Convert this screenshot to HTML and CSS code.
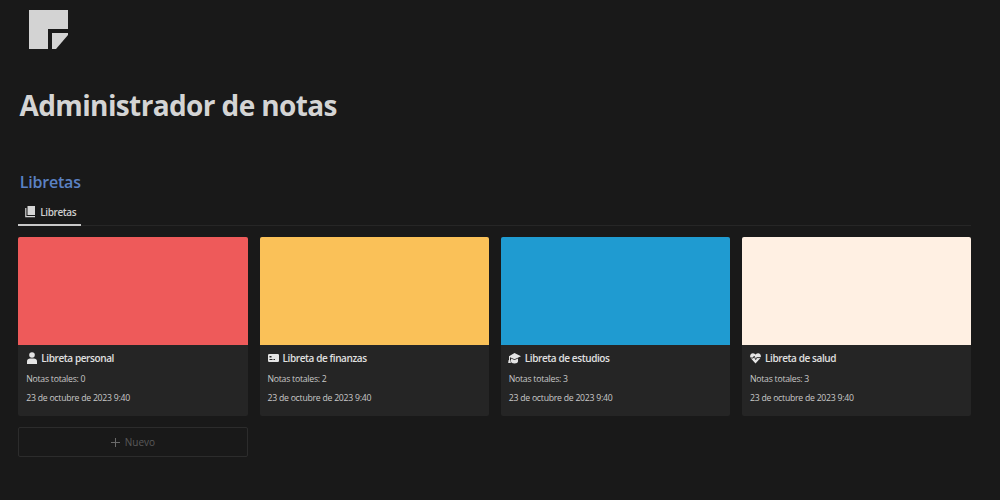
FILE: index.html
```html
<!DOCTYPE html>
<html lang="es">
<head>
<meta charset="utf-8">
<title>Administrador de notas</title>
<link rel="stylesheet" href="styles.css">
</head>
<body>
<main class="page">
  <svg class="logo" viewBox="0 0 39 39" width="39" height="39" aria-hidden="true">
    <path fill="#d3d3d3" d="M0 0H39V19H19V39H0Z"/>
    <path fill="#d3d3d3" d="M23 23H39V25L27 39H23Z"/>
  </svg>
  <h1 class="title">Administrador de notas</h1>
  <h2 class="section">Libretas</h2>
  <div class="tabs">
    <div class="tab">
      <svg class="tab-icon" viewBox="0 0 11 12" width="11" height="12" aria-hidden="true">
        <path fill="#d5d5d5" d="M2.5 0H10V9H2.5Z"/>
        <path fill="none" stroke="#d5d5d5" stroke-width="1.2" d="M.8 2V10.6H10"/>
      </svg>
      <span>Libretas</span>
    </div>
  </div>
  <section class="grid">
    <article class="card">
      <div class="cover cover-red"></div>
      <div class="body">
        <div class="name">
          <svg class="icon icon-person" viewBox="0 0 10 12" width="10" height="12" aria-hidden="true"><circle cx="5" cy="3" r="2.8" fill="#e4e4e4"/><path fill="#e4e4e4" d="M0 12V9.5C0 7.5 1.5 6.6 3 6.6H7C8.5 6.6 10 7.5 10 9.5V12Z"/></svg>
          <span>Libreta personal</span>
        </div>
        <p class="meta">Notas totales: 0</p>
        <p class="meta">23 de octubre de 2023 9:40</p>
      </div>
    </article>
    <article class="card">
      <div class="cover cover-yellow"></div>
      <div class="body">
        <div class="name">
          <svg class="icon" viewBox="0 0 11 12" width="11" height="12" aria-hidden="true"><path fill="#e4e4e4" fill-rule="evenodd" d="M1.2 2H9.8A1.2 1.2 0 0 1 11 3.2V8.8A1.2 1.2 0 0 1 9.8 10H1.2A1.2 1.2 0 0 1 0 8.8V3.2A1.2 1.2 0 0 1 1.2 2ZM1.5 7V8H4.5V7ZM5.5 7V8H7V7ZM1.5 4V5.5H3.5V4Z"/></svg>
          <span>Libreta de finanzas</span>
        </div>
        <p class="meta">Notas totales: 2</p>
        <p class="meta">23 de octubre de 2023 9:40</p>
      </div>
    </article>
    <article class="card">
      <div class="cover cover-blue"></div>
      <div class="body">
        <div class="name">
          <svg class="icon icon-cap" viewBox="0 0 13 12" width="13" height="12" aria-hidden="true"><path fill="#e4e4e4" d="M6.5 1L13 4.2L6.5 7.2L2 5.2V8H1V4.2Z"/><path fill="#e4e4e4" d="M3 6.4L6.5 8.1L10 6.4V9.4C10 10.6 8.4 11.4 6.5 11.4C4.6 11.4 3 10.6 3 9.4Z"/><path fill="#e4e4e4" d="M.6 8H2.4L2.8 11H.2Z"/></svg>
          <span>Libreta de estudios</span>
        </div>
        <p class="meta">Notas totales: 3</p>
        <p class="meta">23 de octubre de 2023 9:40</p>
      </div>
    </article>
    <article class="card">
      <div class="cover cover-cream"></div>
      <div class="body">
        <div class="name">
          <svg class="icon" viewBox="0 0 11 12" width="11" height="12" aria-hidden="true"><path fill="#e4e4e4" d="M5.5 11.4L1 6.6C-.3 5 -.1 3 1 2C2.2 .8 4 1 5.5 2.6C7 1 8.8 .8 10 2C11.1 3 11.3 5 10 6.6Z"/><path fill="none" stroke="#252525" stroke-width=".9" d="M0 6H3.2L4.2 4.2L5.7 7.6L6.7 5.6H11"/></svg>
          <span>Libreta de salud</span>
        </div>
        <p class="meta">Notas totales: 3</p>
        <p class="meta">23 de octubre de 2023 9:40</p>
      </div>
    </article>
  </section>
  <section class="grid grid-new">
    <button class="new" type="button">
      <svg class="plus" viewBox="0 0 9 9" width="9" height="9" aria-hidden="true"><path fill="none" stroke="#6a6a6a" stroke-width="1" d="M4.5 0V9M0 4.5H9"/></svg>
      <span>Nuevo</span>
    </button>
  </section>
</main>
</body>
</html>
```

FILE: styles.css
```css
* { box-sizing: border-box; }
html, body { margin: 0; height: 100%; }
body {
  background: #191919;
  color: #d4d4d4;
  font-family: "Open Sans", "Noto Sans", sans-serif;
  overflow: hidden;
}
.page { width: 971.25px; padding: 10px 0 0 18.25px; }
.logo { display: block; margin-left: 11px; }
.title {
  margin: 36px 0 0 1.25px;
  font-size: 28px;
  line-height: 40px;
  font-weight: 700;
  letter-spacing: -0.62px;
  color: #d4d4d4;
}
.section {
  margin: 45px 0 0 1.5px;
  font-size: 16px;
  line-height: 24px;
  font-weight: 600;
  letter-spacing: -0.2px;
  color: #5b82c4;
}
.tabs {
  margin-top: 5px;
  height: 27px;
  border-bottom: 1px solid #262626;
  display: flex;
}
.tab {
  width: 63px;
  height: 27px;
  padding: 0 0 0 7px;
  border-bottom: 2px solid #c8c8c8;
  display: flex;
  align-items: center;
  gap: 4px;
  font-size: 10px;
  font-weight: 600;
  letter-spacing: -0.4px;
  color: #cfcfcf;
}
.grid {
  margin-top: 11px;
  display: grid;
  grid-template-columns: repeat(4, 1fr);
  column-gap: 12px;
}
.card { background: #252525; height: 179px; border-radius: 2px; overflow: hidden; }
.cover { height: 108px; }
.cover-red { background: #ee5a5a; }
.cover-yellow { background: #fac158; }
.cover-blue { background: #1f9bd1; }
.cover-cream { background: #fff0e3; }
.body { padding: 7px 8px 0; }
.name {
  display: flex;
  align-items: center;
  gap: 4px;
  height: 12px;
  font-size: 10px;
  font-weight: 600;
  letter-spacing: -0.4px;
  color: #e0e0e0;
}
.icon { flex: none; }
.icon-person { margin-left: 1px; }
.icon-cap { margin-left: -1px; }
.meta {
  margin: 0;
  font-size: 8.7px;
  line-height: 19px;
  letter-spacing: -0.25px;
  color: #c8c8c8;
}
.name + .meta { margin-top: 6px; }
.grid-new { margin-top: 11px; }
.new {
  height: 30px;
  background: transparent;
  border: 1px solid #2c2c2c;
  border-radius: 2px;
  display: flex;
  align-items: center;
  justify-content: center;
  gap: 5px;
  font-family: inherit;
  font-size: 10px;
  color: #5a5a5a;
}
.plus { flex: none; }
```
